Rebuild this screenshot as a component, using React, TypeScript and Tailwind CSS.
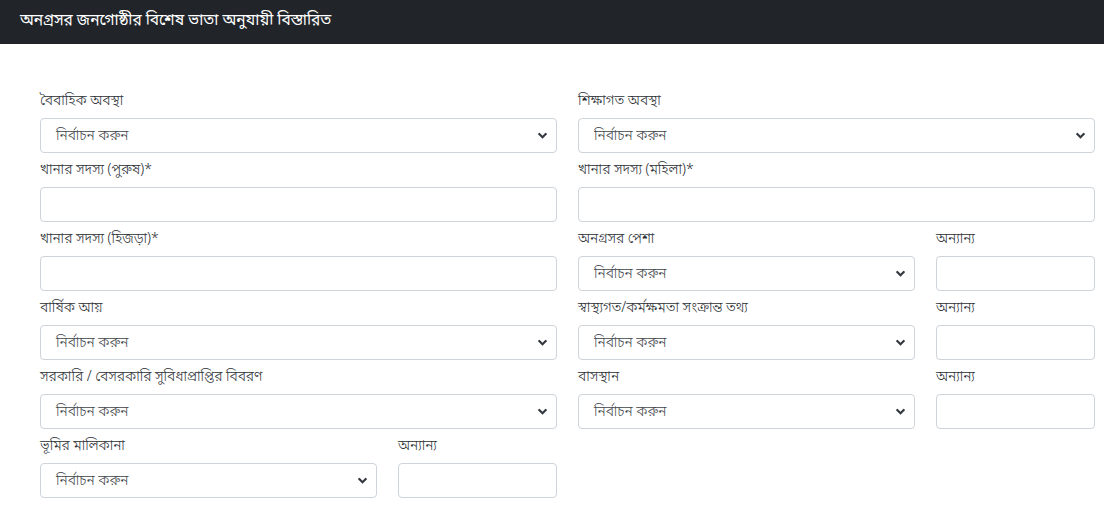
import React from 'react';

const font = { fontFamily: '"Noto Sans Bengali", "Noto Sans", "Liberation Sans", sans-serif' };

const Chevron: React.FC = () => (
  <svg width="9" height="7" viewBox="0 0 9 7" className="absolute right-[9px] top-1/2 -translate-y-1/2">
    <path d="M1.3 1.6 L4.5 4.8 L7.7 1.6" fill="none" stroke="#343a40" strokeWidth="2.1" strokeLinecap="square" />
  </svg>
);

interface FieldProps {
  label: string;
  type?: 'select' | 'input';
  className?: string;
}

const Field: React.FC<FieldProps> = ({ label, type = 'input', className = '' }) => {
  return (
    <div className={`flex flex-col ${className}`}>
      <label className="h-[34px] flex items-center pt-[1px] text-[14px] font-light text-[#2a2e33]">{label}</label>
      {type === 'select' ? (
        <div className="relative h-[35px] rounded-[4px] border border-[#ced4da] bg-white flex items-center pl-[15px] pt-[2px] text-[14px] font-light text-[#3d4349]">
          নির্বাচন করুন
          <Chevron />
        </div>
      ) : (
        <div className="h-[35px] rounded-[4px] border border-[#ced4da] bg-white" />
      )}
    </div>
  );
};

export default function App() {
  return (
    <div className="w-[1104px] h-[510px] bg-white overflow-hidden" style={font}>
      {/* Header */}
      <div className="h-[44px] bg-[#212529] flex items-center px-[20px]">
        <h1 className="text-white text-[15.5px]">অনগ্রসর জনগোষ্ঠীর বিশেষ ভাতা অনুযায়ী বিস্তারিত</h1>
      </div>

      {/* Form */}
      <div className="pt-[40px] pl-[40px] pr-[9px] grid grid-cols-2 gap-x-[21px]">
        <Field label="বৈবাহিক অবস্থা" type="select" />
        <Field label="শিক্ষাগত অবস্থা" type="select" />

        <Field label="খানার সদস্য (পুরুষ)*" />
        <Field label="খানার সদস্য (মহিলা)*" />

        <Field label="খানার সদস্য (হিজড়া)*" />
        <div className="grid grid-cols-[337px_1fr] gap-x-[21px]">
          <Field label="অনগ্রসর পেশা" type="select" />
          <Field label="অন্যান্য" />
        </div>

        <Field label="বার্ষিক আয়" type="select" />
        <div className="grid grid-cols-[337px_1fr] gap-x-[21px]">
          <Field label="স্বাস্থ্যগত/কর্মক্ষমতা সংক্রান্ত তথ্য" type="select" />
          <Field label="অন্যান্য" />
        </div>

        <Field label="সরকারি / বেসরকারি সুবিধাপ্রাপ্তির বিবরণ" type="select" />
        <div className="grid grid-cols-[337px_1fr] gap-x-[21px]">
          <Field label="বাসস্থান" type="select" />
          <Field label="অন্যান্য" />
        </div>

        <div className="grid grid-cols-[337px_1fr] gap-x-[21px]">
          <Field label="ভূমির মালিকানা" type="select" />
          <Field label="অন্যান্য" />
        </div>
      </div>
    </div>
  );
}
